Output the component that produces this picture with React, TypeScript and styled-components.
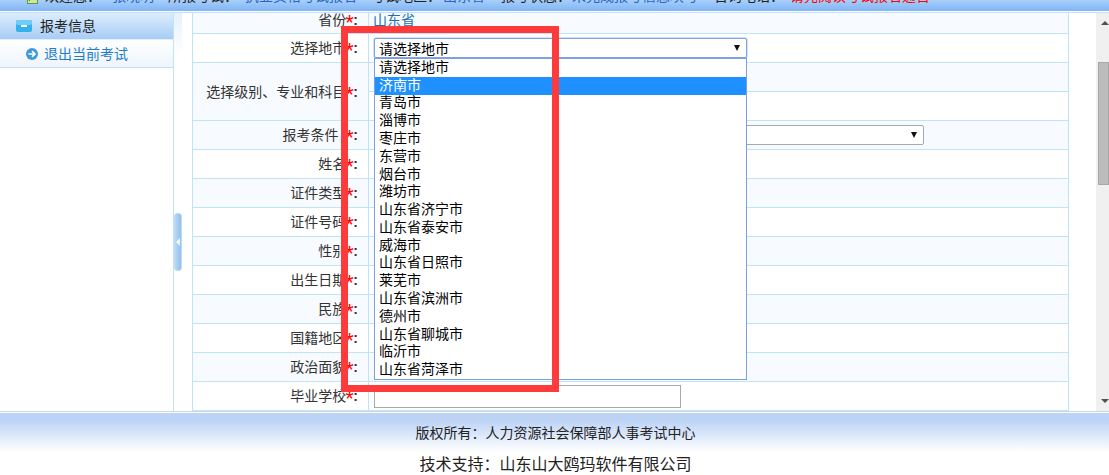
import React from "react";
import styled, { createGlobalStyle } from "styled-components";

const GlobalStyle = createGlobalStyle`
  html, body {
    margin: 0;
    height: 100%;
    overflow: hidden;
    background: #fff;
    font-family: "Liberation Sans", "Noto Sans CJK SC", sans-serif;
    font-size: 14px;
    color: #333;
  }
`;

const lineBlue = "#bfe3f7";

const Page = styled.div`
  position: relative;
  width: 1109px;
  height: 475px;
  display: grid;
  grid-template-rows: 13px 398px 64px;
  overflow: hidden;
`;

const TopBar = styled.header`
  display: flex;
  align-items: flex-end;
  height: 13px;
  box-sizing: border-box;
  padding: 0 0 10px 27px;
  overflow: hidden;
  background: linear-gradient(#a8cff8, #80b5f7 11px, #fff 11px, #fff 12px, #c4e0f4 12px);
  white-space: nowrap;
  line-height: 14px;
`;

const TopIcon = styled.svg`
  flex: none;
  width: 11px;
  height: 11px;
  margin: 0 7px -1px 0;
`;

const TopLabel = styled.span`
  color: #222;
  margin-right: ${({ $gap }: { $gap: number }) => $gap}px;
`;

const TopValue = styled.span`
  color: ${({ $red }: { $gap: number; $red?: boolean }) => ($red ? "#f00" : "#2a63c4")};
  margin-right: ${({ $gap }) => $gap}px;
`;

const Main = styled.main`
  display: flex;
  min-height: 0;
`;

const Sidebar = styled.aside`
  flex: none;
  width: 174px;
  box-sizing: border-box;
  border-right: 1px solid ${lineBlue};
`;

const SideHead = styled.div`
  display: flex;
  align-items: center;
  gap: 8px;
  height: 26px;
  box-sizing: content-box;
  padding-left: 16px;
  color: #222;
  background: linear-gradient(#dcedfd, #a8ccf6);
  border-bottom: 1px solid #e2f0fb;
`;

const SideHeadText = styled.span`
  margin-top: -2px;
`;

const SideLink = styled.a`
  display: flex;
  align-items: center;
  gap: 6px;
  height: 27px;
  padding-left: 26px;
  color: #1f7ccc;
  background: linear-gradient(#fff, #eef5fb);
  border-bottom: 1px solid #c4def0;
`;

const SideLinkText = styled.span`
  margin-top: -2px;
`;

const Divider = styled.div`
  flex: none;
  display: flex;
  flex-direction: column;
  width: 18px;
`;

const DividerFade = styled.div`
  flex: none;
  width: 8px;
  height: 42px;
  background: linear-gradient(#e6f1fb, #fff);
`;

const Handle = styled.div`
  display: flex;
  align-items: center;
  justify-content: center;
  width: 8px;
  height: 58px;
  margin-top: 158px;
  box-sizing: border-box;
  border: 1px solid #c0dcf5;
  border-radius: 3px;
  background: linear-gradient(90deg, #b9d8f5, #92c0ee);

  &::after {
    content: "";
    border-style: solid;
    border-width: 4px 4px 4px 0;
    border-color: transparent #f2f7fc transparent transparent;
  }
`;

const Panel = styled.section`
  flex: none;
  width: 877px;
  box-sizing: border-box;
  border-left: 1px solid ${lineBlue};
  border-right: 1px solid ${lineBlue};
`;

const Row = styled.div<{ $height?: number }>`
  display: flex;
  height: ${({ $height }) => $height ?? 29}px;
  box-sizing: border-box;
`;

const Label = styled.div<{ $shade?: boolean; $lift?: number }>`
  flex: none;
  display: flex;
  align-items: center;
  justify-content: flex-end;
  width: 176px;
  box-sizing: border-box;
  padding: 0 10px ${({ $lift }) => $lift ?? 0}px 0;
  border-right: 1px solid ${lineBlue};
  border-bottom: 1px solid ${lineBlue};
  background: ${({ $shade }) => ($shade ? "#f7fbff" : "#fff")};
  white-space: pre;
`;

const LabelText = styled.span`
  margin-top: -2px;
  color: #333;
`;

const Star = styled.span`
  position: relative;
  top: 3px;
  width: 7px;
  margin-left: -1px;
  color: #f00;
  font-size: 22px;
  line-height: 14px;
`;

const Colon = styled.b`
  color: #333;
  margin-left: 1px;
`;

const ValueStack = styled.div`
  flex: 1;
  display: flex;
  flex-direction: column;
`;

const Value = styled.div<{ $shade?: boolean; $lift?: number }>`
  flex: 1;
  display: flex;
  align-items: center;
  min-width: 0;
  padding: 0 0 ${({ $lift }) => $lift ?? 0}px 5px;
  border-bottom: 1px solid ${lineBlue};
  background: ${({ $shade }) => ($shade ? "#f7fbff" : "#fff")};
`;

const ProvinceText = styled.span`
  color: #1f6fb0;
  margin: -2px 0 0 -1px;
`;

const SelectBox = styled.div<{ $width: number; $focused?: boolean }>`
  position: relative;
  display: flex;
  align-items: center;
  width: ${({ $width }) => $width}px;
  height: 20px;
  box-sizing: border-box;
  padding: 0 0 1px 4px;
  color: #000;
  background: #fff;
  border: 1px solid ${({ $focused }) => ($focused ? "#7ea4e6" : "#a9a9a9")};
  border-radius: 2px;
  box-shadow: ${({ $focused }) => ($focused ? "0 0 0 0.5px #a9c4f2" : "none")};

  &::after {
    content: "";
    position: absolute;
    right: 6px;
    top: 6px;
    border-style: solid;
    border-width: 6px 3.5px 0;
    border-color: #111 transparent transparent;
  }
`;

const OptionList = styled.ul`
  position: absolute;
  z-index: 2;
  left: -1px;
  right: -1px;
  top: 100%;
  height: 322px;
  margin: 1px 0 0;
  padding: 0;
  box-sizing: border-box;
  list-style: none;
  display: grid;
  grid-template-rows: repeat(18, 1fr);
  background: #fff;
  border: 1px solid #7b9fd9;
`;

const Option = styled.li<{ $active?: boolean }>`
  display: flex;
  align-items: center;
  min-height: 0;
  padding: 0 0 2px 4px;
  line-height: 14px;
  color: ${({ $active }) => ($active ? "#fff" : "#000")};
  background: ${({ $active }) => ($active ? "#1e90ff" : "transparent")};
`;

const TextInput = styled.input`
  width: 307px;
  height: 23px;
  box-sizing: border-box;
  margin: 0;
  padding: 0 4px;
  border: 1px solid #a9a9a9;
  background: #fff;
`;

const Scrollbar = styled.div`
  flex: none;
  display: flex;
  flex-direction: column;
  align-items: flex-end;
  width: 13px;
  margin-left: 27px;
  background: #f0f0f0;
`;

const ArrowUp = styled.div`
  flex: none;
  width: 0;
  height: 0;
  margin: 8px 0 0;
  border-style: solid;
  border-width: 0 4px 4px;
  border-color: transparent transparent #505050;
  align-self: flex-start;
  margin-left: 5px;
`;

const Thumb = styled.div`
  flex: none;
  width: 11px;
  height: 123px;
  margin-top: 37px;
  box-sizing: border-box;
  background: #bcbcbc;
  border: 1px solid #a8a8a8;
`;

const ArrowDown = styled.div`
  flex: none;
  width: 0;
  height: 0;
  margin-top: auto;
  margin-bottom: 8px;
  border-style: solid;
  border-width: 4px 4px 0;
  border-color: #505050 transparent transparent;
  align-self: flex-start;
  margin-left: 5px;
`;

const Footer = styled.footer`
  display: flex;
  flex-direction: column;
  align-items: center;
  box-sizing: border-box;
  padding: 11px 0 0 2px;
  gap: 12px;
  color: #222;
  line-height: 20px;
  border-top: 1px solid #cbd8e4;
  background: linear-gradient(#fff 1px, #bcd3f5 1px, #bcd3f5 8px, #fff 40px);
`;

const FooterLine = styled.div<{ $size: number }>`
  font-size: ${({ $size }) => $size}px;
`;

const Annotation = styled.div`
  position: absolute;
  z-index: 3;
  left: 341px;
  top: 26px;
  width: 218px;
  height: 366px;
  box-sizing: border-box;
  border: 7px solid #ff3a3a;
  pointer-events: none;
`;

const cities = [
  "请选择地市",
  "济南市",
  "青岛市",
  "淄博市",
  "枣庄市",
  "东营市",
  "烟台市",
  "潍坊市",
  "山东省济宁市",
  "山东省泰安市",
  "威海市",
  "山东省日照市",
  "莱芜市",
  "山东省滨洲市",
  "德州市",
  "山东省聊城市",
  "临沂市",
  "山东省菏泽市",
];

const plainRows = [
  { name: "姓名", shade: false },
  { name: "证件类型", shade: true },
  { name: "证件号码", shade: false },
  { name: "性别", shade: true },
  { name: "出生日期", shade: false },
  { name: "民族", shade: true },
  { name: "国籍地区", shade: false },
  { name: "政治面貌", shade: true },
];

const FieldLabel = ({ name, shade, lift }: { name: string; shade?: boolean; lift?: number }) => (
  <Label $shade={shade} $lift={lift}>
    <LabelText>{name}</LabelText>
    <Star>*</Star>
    <Colon>:</Colon>
  </Label>
);

export default function App() {
  return (
    <Page>
      <GlobalStyle />
      <TopBar>
        <TopIcon viewBox="0 0 11 11">
          <rect x="0.5" y="0.5" width="10" height="10" fill="#cfe8a8" stroke="#5f9a35" />
          <path d="M2 8 L4 5 L6 7 L9 3" fill="none" stroke="#3f7a20" />
        </TopIcon>
        <TopLabel $gap={11}>欢迎您：</TopLabel>
        <TopValue $gap={14}>张晓明</TopValue>
        <TopLabel $gap={7}>所报考试：</TopLabel>
        <TopValue $gap={14}>执业资格考试报名</TopValue>
        <TopLabel $gap={2}>考试地区：</TopLabel>
        <TopValue $gap={16}>山东省</TopValue>
        <TopLabel $gap={1}>报考状态：</TopLabel>
        <TopValue $gap={16}>未完成报考信息填写</TopValue>
        <TopLabel $gap={6}>咨询电话：</TopLabel>
        <TopValue $gap={0} $red>
          请先阅读考试报名通告
        </TopValue>
      </TopBar>

      <Main>
        <Sidebar>
          <SideHead>
            <svg width="16" height="12" viewBox="0 0 16 12">
              <rect width="16" height="12" rx="2" fill="#33b1ea" />
              <rect y="0" width="16" height="5" rx="2" fill="#6fcdf3" />
              <rect x="5" y="5" width="6" height="2" fill="#fff" />
            </svg>
            <SideHeadText>报考信息</SideHeadText>
          </SideHead>
          <SideLink>
            <svg width="12" height="12" viewBox="0 0 12 12">
              <circle cx="6" cy="6" r="6" fill="#3f9ad8" />
              <path d="M2.5 6 H8.5 M6 3.2 L9 6 L6 8.8" fill="none" stroke="#fff" strokeWidth="1.6" />
            </svg>
            <SideLinkText>退出当前考试</SideLinkText>
          </SideLink>
        </Sidebar>

        <Divider>
          <DividerFade />
          <Handle />
        </Divider>

        <Panel>
          <Row $height={21}>
            <FieldLabel name="省份" shade lift={7} />
            <Value $shade $lift={7}>
              <ProvinceText>山东省</ProvinceText>
            </Value>
          </Row>
          <Row>
            <FieldLabel name="选择地市" />
            <Value>
              <SelectBox $width={373} $focused>
                请选择地市
                <OptionList>
                  {cities.map((city) => (
                    <Option key={city} $active={city === "济南市"}>
                      {city}
                    </Option>
                  ))}
                </OptionList>
              </SelectBox>
            </Value>
          </Row>
          <Row $height={58}>
            <FieldLabel name="选择级别、专业和科目" shade />
            <ValueStack>
              <Value $shade />
              <Value />
            </ValueStack>
          </Row>
          <Row>
            <FieldLabel name={"报考条件\u00a0\u00a0"} shade />
            <Value $shade>
              <SelectBox $width={550} />
            </Value>
          </Row>
          {plainRows.map((row) => (
            <Row key={row.name}>
              <FieldLabel name={row.name} shade={row.shade} />
              <Value $shade={row.shade} />
            </Row>
          ))}
          <Row>
            <FieldLabel name="毕业学校" />
            <Value>
              <TextInput />
            </Value>
          </Row>
        </Panel>

        <Scrollbar>
          <ArrowUp />
          <Thumb />
          <ArrowDown />
        </Scrollbar>
      </Main>

      <Footer>
        <FooterLine $size={14}>版权所有：人力资源社会保障部人事考试中心</FooterLine>
        <FooterLine $size={16}>技术支持：山东山大鸥玛软件有限公司</FooterLine>
      </Footer>

      <Annotation />
    </Page>
  );
}
